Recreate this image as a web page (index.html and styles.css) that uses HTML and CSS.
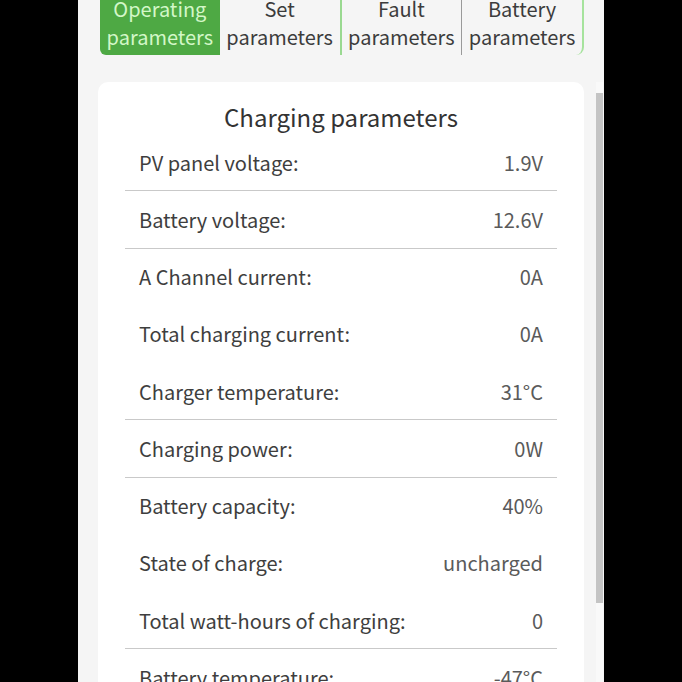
FILE: index.html
```html
<!DOCTYPE html>
<html lang="en">

<head>
    <meta charset="UTF-8">
    <meta name="viewport" content="width=device-width, initial-scale=1.0">
    <title>Charging parameters</title>
    <link rel="stylesheet" href="styles.css">
</head>

<body>
    <div class="phone">
        <!-- 상단 탭 -->
        <nav class="tabs">
            <a href="#" class="tab on">Operating parameters</a>
            <a href="#" class="tab">Set parameters</a>
            <a href="#" class="tab">Fault parameters</a>
            <a href="#" class="tab">Battery parameters</a>
        </nav>

        <!-- 스크롤 영역 -->
        <main class="scroller">
            <section class="card">
                <h2 class="card-tit">Charging parameters</h2>
                <ul class="rows">
                    <li class="line"><span>PV panel voltage:</span><b>1.9V</b></li>
                    <li class="line"><span>Battery voltage:</span><b>12.6V</b></li>
                    <li><span>A Channel current:</span><b>0A</b></li>
                    <li><span>Total charging current:</span><b>0A</b></li>
                    <li class="line"><span>Charger temperature:</span><b>31°C</b></li>
                    <li class="line"><span>Charging power:</span><b>0W</b></li>
                    <li><span>Battery capacity:</span><b>40%</b></li>
                    <li><span>State of charge:</span><b>uncharged</b></li>
                    <li class="line"><span>Total watt-hours of charging:</span><b>0</b></li>
                    <li><span>Battery temperature:</span><b>-47°C</b></li>
                </ul>
            </section>

            <!-- 스크롤바 -->
            <div class="sbar">
                <div class="thumb"></div>
            </div>
        </main>
    </div>
</body>

</html>
```

FILE: styles.css
```css
html,
body {
    margin: 0;
    padding: 0;
}

body {
    background-color: #000;
    font-family: "Noto Sans CJK SC", "Noto Sans", sans-serif;
    color: #3e3e3e;
}

ul {
    margin: 0;
    padding: 0;
    list-style: none;
}

/* 가운데 폰화면 */
.phone {
    display: flex;
    flex-direction: column;
    width: 526px;
    height: 682px;
    margin: 0 auto;
    background-color: #f5f5f5;
    overflow: hidden;
}

/* 탭메뉴 */
.tabs {
    display: flex;
    margin: -9px 20px 0 22px;
    border-right: 2px solid #a6e39d;
    border-radius: 0 0 8px 8px;
}

.tab {
    flex: 1;
    padding: 4px 0;
    font-size: 20px;
    line-height: 28px;
    text-align: center;
    color: #3c3c3c;
    text-decoration: none;
}

.tab.on {
    background-color: #4ea944;
    color: #d3f7c8;
    border-radius: 0 0 0 6px;
}

.tab:nth-child(2) {
    border-right: 2px solid #9ad991;
}

.tab:nth-child(3) {
    border-right: 1px solid #9a9a9a;
}

/* 스크롤영역 */
.scroller {
    flex: 1;
    display: flex;
    align-items: flex-start;
    gap: 12px;
    margin-top: 27px;
    padding: 0 1px 0 20px;
    overflow: hidden;
}

/* 카드 */
.card {
    flex: 1;
    background-color: #fff;
    border-radius: 10px;
    padding: 18px 27px 20px;
}

.card-tit {
    margin: 0;
    font-size: 24px;
    font-weight: normal;
    line-height: 34px;
    text-align: center;
    color: #333;
}

.rows li {
    display: flex;
    justify-content: space-between;
    align-items: center;
    height: 56.25px;
    padding: 0 14px;
    font-size: 20px;
    border-bottom: 1px solid transparent;
}

.rows li.line {
    border-bottom-color: #c9c9c9;
}

.rows b {
    font-weight: normal;
    color: #5a5a5a;
}

/* 스크롤바 */
.sbar {
    align-self: stretch;
    width: 7px;
    padding-top: 11px;
    background-color: #f9f9f9;
}

.thumb {
    height: 510px;
    background-color: #c4c4c4;
}
```
